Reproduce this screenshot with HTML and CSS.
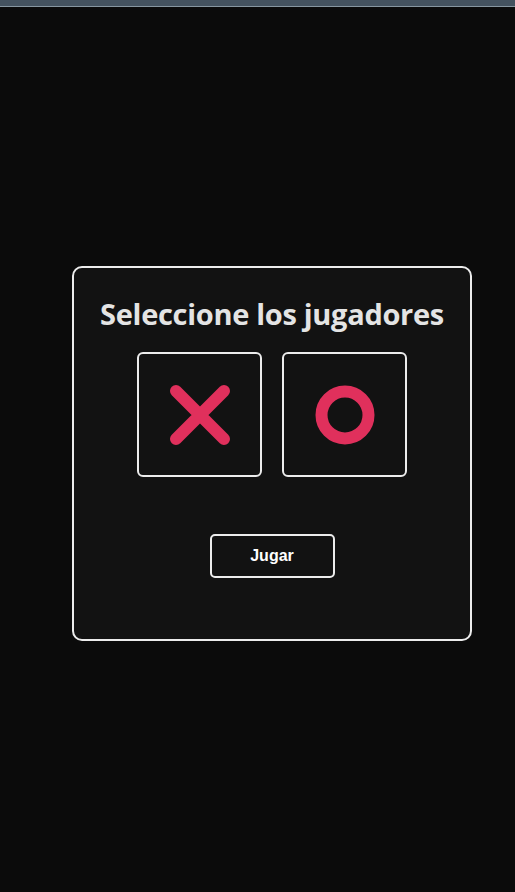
FILE: index.html
```html
<!DOCTYPE html>
<html lang="es">
<head>
<meta charset="utf-8">
<title>Tres en raya</title>
<link rel="stylesheet" href="styles.css">
</head>
<body>
<div class="topbar"></div>
<main class="stage">
  <section class="card">
    <h1 class="title">Seleccione los jugadores</h1>
    <div class="choices">
      <button class="choice" aria-label="X">
        <svg width="62" height="62" viewBox="0 0 62 62"><path d="M7 7 L55 55 M55 7 L7 55" stroke="#e0305c" stroke-width="12" stroke-linecap="round" fill="none"/></svg>
      </button>
      <button class="choice" aria-label="O">
        <svg width="60" height="60" viewBox="0 0 60 60"><circle cx="30" cy="30" r="23.5" stroke="#e0305c" stroke-width="12" fill="none"/></svg>
      </button>
    </div>
    <button class="play">Jugar</button>
  </section>
</main>
</body>
</html>
```
FILE: styles.css
```css
html, body {
  margin: 0;
  padding: 0;
  background: #0b0b0b;
  height: 100%;
}
.topbar {
  height: 6px;
  background: #44525f;
  border-bottom: 1px solid #8796a0;
}
.stage {
  display: flex;
  justify-content: center;
  padding: 259px 0 0 29px;
}
.card {
  box-sizing: border-box;
  width: 400px;
  height: 375px;
  background: #121212;
  border: 2px solid #ececec;
  border-radius: 10px;
  display: flex;
  flex-direction: column;
  align-items: center;
}
.title {
  margin: 28px 0 0;
  font-family: "Open Sans", "DejaVu Sans", sans-serif;
  font-weight: 700;
  font-size: 29px;
  line-height: 36px;
  color: #e4e4e4;
  letter-spacing: -0.3px;
}
.choices {
  display: flex;
  gap: 20px;
  margin-top: 20px;
}
.choice {
  box-sizing: border-box;
  width: 125px;
  height: 125px;
  padding: 0;
  background: #121212;
  border: 2px solid #ececec;
  border-radius: 6px;
  display: flex;
  align-items: center;
  justify-content: center;
}
.play {
  box-sizing: border-box;
  margin-top: 57px;
  width: 125px;
  height: 44px;
  background: #121212;
  border: 2px solid #ececec;
  border-radius: 5px;
  color: #ffffff;
  font-family: "Liberation Sans", Arial, sans-serif;
  font-weight: 700;
  font-size: 16px;
}
```
